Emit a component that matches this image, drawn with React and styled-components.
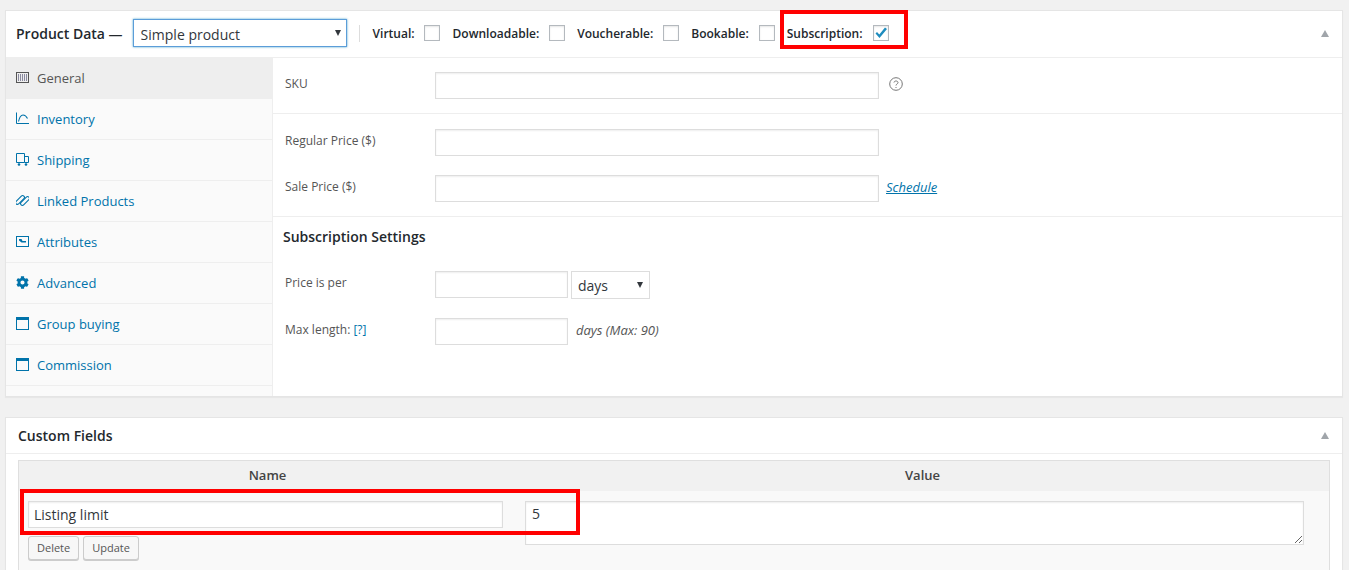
import React from "react";
import styled, { createGlobalStyle } from "styled-components";
import { FaCog } from "react-icons/fa";

const Global = createGlobalStyle`
  html, body { margin: 0; padding: 0; background: #f1f1f1; height: 570px; overflow: hidden; }
  * { box-sizing: border-box; }
  body { font-family: "Open Sans", sans-serif; font-size: 13px; color: #444; }
`;

const Page = styled.div`
  padding: 10px 6px 0 5px;
  display: flex;
  flex-direction: column;
  gap: 20px;
`;
const Box = styled.section`
  background: #fff;
  border: 1px solid #e5e5e5;
  box-shadow: 0 1px 1px rgba(0, 0, 0, 0.04);
`;
const Header = styled.header`
  height: 47px;
  border-bottom: 1px solid #eee;
  display: flex;
  align-items: center;
  padding: 0 13px 2px 10px;
`;
const BoxTitle = styled.h2`
  margin: 0;
  font-size: 14px;
  font-weight: 600;
  color: #23282d;
  white-space: nowrap;
`;
const SelectWrap = styled.span`
  position: relative;
  display: inline-flex;
  flex: none;
  margin-left: ${(p) => p.$ml || 0}px;
  &::after {
    content: "";
    position: absolute;
    right: ${(p) => p.$arrow || 6}px;
    top: 11px;
    border-left: 3.5px solid transparent;
    border-right: 3.5px solid transparent;
    border-top: 6px solid #32373c;
    pointer-events: none;
  }
`;
const TypeSelect = styled.select`
  appearance: none;
  width: 214px;
  height: 28px;
  padding: 2px 7px 0;
  font: 14px "Open Sans", sans-serif;
  color: #32373c;
  background: #fff;
  border: 1px solid #5b9dd9;
  border-radius: 0;
  box-shadow: 0 0 2px rgba(30, 140, 190, 0.8);
  outline: none;
`;
const Divider = styled.span`
  width: 1px;
  height: 17px;
  background: #ddd;
  margin: 0 13px 0 12px;
`;
const Option = styled.label`
  position: relative;
  display: flex;
  align-items: center;
  gap: ${(p) => p.$gap || 10}px;
  margin-right: ${(p) => p.$mr || 12}px;
  font-size: 12px;
  font-weight: 600;
  color: #23282d;
  white-space: nowrap;
`;
const Check = styled.span`
  width: 16px;
  height: 16px;
  border: 1px solid #b4b9be;
  background: #fff;
  display: flex;
  align-items: center;
  justify-content: center;
  box-shadow: inset 0 1px 2px rgba(0, 0, 0, 0.1);
`;
const Highlight = styled.span`
  position: absolute;
  border: 4px solid #f00;
  pointer-events: none;
  z-index: 2;
`;
const SubscriptionMark = styled(Highlight)`
  left: -7px;
  top: -15px;
  width: 128px;
  height: 39px;
`;
const Collapse = styled.span`
  margin-left: auto;
  width: 0;
  height: 0;
  border-left: 4.500px solid transparent;
  border-right: 4.500px solid transparent;
  border-bottom: 7px solid #a0a5aa;
`;
const Body = styled.div`
  display: flex;
  height: 338px;
`;
const Tabs = styled.nav`
  width: 267px;
  flex: none;
  background: #fafafa;
  border-right: 1px solid #eee;
  display: flex;
  flex-direction: column;
`;
const Tab = styled.a`
  height: 41px;
  flex: none;
  display: flex;
  align-items: center;
  gap: 8px;
  padding: 0 0 0 10px;
  border-bottom: 1px solid #eee;
  background: ${(p) => (p.$active ? "#eee" : "transparent")};
  color: ${(p) => (p.$active ? "#555" : "#0073aa")};
  font-size: 13px;
  svg { flex: none; width: 13px; height: 13px; position: relative; top: -1px; }
`;
const Panel = styled.div`
  flex: 1;
  display: flex;
  flex-direction: column;
`;
const Group = styled.div`
  padding: ${(p) => p.$pad || "14px 12px 14px"};
  border-bottom: ${(p) => (p.$last ? "none" : "1px solid #eee")};
  display: flex;
  flex-direction: column;
  gap: ${(p) => p.$gap || "19px"};
`;
const Field = styled.div`
  display: flex;
  align-items: center;
  height: 27px;
`;
const Label = styled.span`
  width: 150px;
  flex: none;
  font-size: 12px;
  color: #555;
  position: relative;
  top: -2px;
`;
const LabelLink = styled.span`
  color: #0073aa;
`;
const TextInput = styled.input`
  width: ${(p) => p.$w || 444}px;
  height: 27px;
  flex: none;
  border: 1px solid #ddd;
  background: #fff;
  box-shadow: inset 0 1px 2px rgba(0, 0, 0, 0.07);
  padding: 0 5px;
  font: 14px "Open Sans", sans-serif;
  color: #32373c;
  outline: none;
`;
const Help = styled.svg`
  width: 14px;
  height: 14px;
  margin: -3px 0 0 10px;
`;
const Schedule = styled.a`
  margin: -4px 0 0 7px;
  font-size: 13px;
  font-style: italic;
  color: #0073aa;
  text-decoration: underline;
`;
const SectionTitle = styled.h3`
  margin: 0;
  padding: 10px 0 0 10px;
  font-size: 14px;
  font-weight: 600;
  line-height: 20px;
  color: #23282d;
`;
const UnitSelect = styled.select`
  appearance: none;
  width: 79px;
  height: 28px;
  padding: 2px 6px 0;
  font: 14px "Open Sans", sans-serif;
  color: #32373c;
  background: #fff;
  border: 1px solid #ddd;
  border-radius: 0;
  outline: none;
`;
const Hint = styled.span`
  margin: -4px 0 0 8px;
  font-size: 13px;
  font-style: italic;
  color: #555;
`;
const CustomHeader = styled.header`
  height: 36px;
  border-bottom: 1px solid #eee;
  display: flex;
  align-items: center;
  padding: 0 13px 0 12px;
`;
const CustomBody = styled.div`
  padding: 6px 12px 0;
`;
const Table = styled.div`
  border: 1px solid #dfdfdf;
  background: #f9f9f9;
  height: 140px;
`;
const TableHead = styled.div`
  height: 30px;
  padding-bottom: 2px;
  background: #f1f1f1;
  display: grid;
  grid-template-columns: 497px 1fr;
  align-items: center;
  text-align: center;
  font-size: 13px;
  font-weight: 600;
  color: #444;
`;
const TableRow = styled.div`
  position: relative;
  display: grid;
  grid-template-columns: 475px 779px;
  column-gap: 22px;
  padding: 10px 0 0 9px;
  align-items: start;
`;
const RowMark = styled(Highlight)`
  left: 1px;
  top: -2px;
  width: 560px;
  height: 46px;
`;
const NameCell = styled.div`
  display: flex;
  flex-direction: column;
  gap: 8px;
`;
const NameInput = styled(TextInput)`
  width: 475px;
`;
const Buttons = styled.div`
  display: flex;
  gap: 4px;
`;
const Button = styled.button`
  height: 24px;
  padding: 0 8px 2px;
  font: 11px "Open Sans", sans-serif;
  color: #555;
  background: #f7f7f7;
  border: 1px solid #ccc;
  border-radius: 3px;
  box-shadow: 0 1px 0 #ccc;
`;
const ValueArea = styled.textarea`
  width: 779px;
  height: 44px;
  border: 1px solid #ddd;
  background: #fff;
  box-shadow: inset 0 1px 2px rgba(0, 0, 0, 0.07);
  padding: 2px 6px;
  font: 14px "Open Sans", sans-serif;
  color: #32373c;
  outline: none;
`;

const IconGeneral = () => (
  <svg viewBox="0 0 13 13" fill="none">
    <rect x="0.5" y="1.5" width="12" height="10" stroke="#555" />
    <path d="M2.500 3v7M4.500 3v7M6.500 3v7M8.500 3v7M10.500 3v7" stroke="#8a8aa0" />
  </svg>
);
const IconInventory = () => (
  <svg viewBox="0 0 13 13" fill="none" stroke="#0073aa">
    <path d="M0.5 0.500V11.500H13" />
    <path d="M2.500 9.500C3.500 5 5 3 7 3c2 0 3.500 1.500 4.500 3.500" strokeWidth="1.100" />
  </svg>
);
const IconShipping = () => (
  <svg viewBox="0 0 13 13" fill="none" stroke="#0073aa">
    <path d="M0.500 9.500V0.500H8.500V9.500H0.500" />
    <path d="M8.500 3.500H12.500V9.500H8.500" />
    <circle cx="3" cy="11.500" r="1.300" fill="#0073aa" stroke="none" />
    <circle cx="10" cy="11.500" r="1.300" fill="#0073aa" stroke="none" />
  </svg>
);
const IconLinked = () => (
  <svg viewBox="0 0 13 13" fill="none" stroke="#0073aa" strokeWidth="1.100">
    <rect x="-1.500" y="4.200" width="11" height="3.600" rx="1.800" transform="rotate(-45 4 6)" />
    <rect x="3.500" y="5.200" width="11" height="3.600" rx="1.800" transform="rotate(-45 9 7)" />
  </svg>
);
const IconAttributes = () => (
  <svg viewBox="0 0 13 13" fill="none">
    <rect x="0.500" y="1.500" width="12" height="10" stroke="#0073aa" />
    <path d="M3 4h2.500l1 2H10v1.500H5.500L3 5.500z" fill="#0073aa" />
  </svg>
);
const IconWindow = () => (
  <svg viewBox="0 0 13 13" fill="none">
    <rect x="0.500" y="0.500" width="12" height="12" stroke="#0073aa" />
    <rect x="0" y="0" width="13" height="3" fill="#0073aa" />
  </svg>
);

const items = [
  { label: "General", icon: <IconGeneral />, active: true },
  { label: "Inventory", icon: <IconInventory /> },
  { label: "Shipping", icon: <IconShipping /> },
  { label: "Linked Products", icon: <IconLinked /> },
  { label: "Attributes", icon: <IconAttributes /> },
  { label: "Advanced", icon: <FaCog color="#0073aa" /> },
  { label: "Group buying", icon: <IconWindow /> },
  { label: "Commission", icon: <IconWindow /> },
];

export default function App() {
  return (
    <Page>
      <Global />
      <Box>
        <Header>
          <BoxTitle>Product Data —</BoxTitle>
          <SelectWrap $ml={10}>
            <TypeSelect defaultValue="simple">
              <option value="simple">Simple product</option>
            </TypeSelect>
          </SelectWrap>
          <Divider />
          <Option $gap={9.5} $mr={12.5}>Virtual: <Check /></Option>
          <Option>Downloadable: <Check /></Option>
          <Option>Voucherable: <Check /></Option>
          <Option>Bookable: <Check /></Option>
          <Option>
            Subscription:
            <Check>
              <svg width="14" height="14" viewBox="0 0 14 14">
                <path d="M1.500 7.500 5.500 12 13 3 11 1.500 5.300 8.500 3 6z" fill="#1e8cbe" />
              </svg>
            </Check>
            <SubscriptionMark />
          </Option>
          <Collapse />
        </Header>
        <Body>
          <Tabs>
            {items.map((t) => (
              <Tab key={t.label} $active={t.active}>{t.icon}{t.label}</Tab>
            ))}
          </Tabs>
          <Panel>
            <Group $pad="14px 12px 14px">
              <Field>
                <Label>SKU</Label>
                <TextInput />
                <Help viewBox="0 0 14 14" fill="none">
                  <circle cx="7" cy="7" r="6.300" stroke="#777" />
                  <path d="M5 5.500C5 3.500 9 3.500 9 5.500 9 7 7 7 7 8.500" stroke="#777" />
                  <path d="M6.500 10h1v1h-1z" fill="#777" />
                </Help>
              </Field>
            </Group>
            <Group $pad="15px 12px 14px">
              <Field>
                <Label>Regular Price ($)</Label>
                <TextInput />
              </Field>
              <Field>
                <Label>Sale Price ($)</Label>
                <TextInput />
                <Schedule>Schedule</Schedule>
              </Field>
            </Group>
            <SectionTitle>Subscription Settings</SectionTitle>
            <Group $pad="24px 12px 0" $gap="20px" $last>
              <Field>
                <Label>Price is per</Label>
                <TextInput $w={133} />
                <SelectWrap $ml={3} $arrow={7}>
                  <UnitSelect defaultValue="days">
                    <option value="days">days</option>
                  </UnitSelect>
                </SelectWrap>
              </Field>
              <Field>
                <Label>Max length: <LabelLink>[?]</LabelLink></Label>
                <TextInput $w={133} />
                <Hint>days (Max: 90)</Hint>
              </Field>
            </Group>
          </Panel>
        </Body>
      </Box>
      <Box>
        <CustomHeader>
          <BoxTitle>Custom Fields</BoxTitle>
          <Collapse />
        </CustomHeader>
        <CustomBody>
          <Table>
            <TableHead>
              <span>Name</span>
              <span>Value</span>
            </TableHead>
            <TableRow>
              <NameCell>
                <NameInput defaultValue="Listing limit" />
                <Buttons>
                  <Button>Delete</Button>
                  <Button>Update</Button>
                </Buttons>
              </NameCell>
              <ValueArea defaultValue="5" />
              <RowMark />
            </TableRow>
          </Table>
        </CustomBody>
      </Box>
    </Page>
  );
}
